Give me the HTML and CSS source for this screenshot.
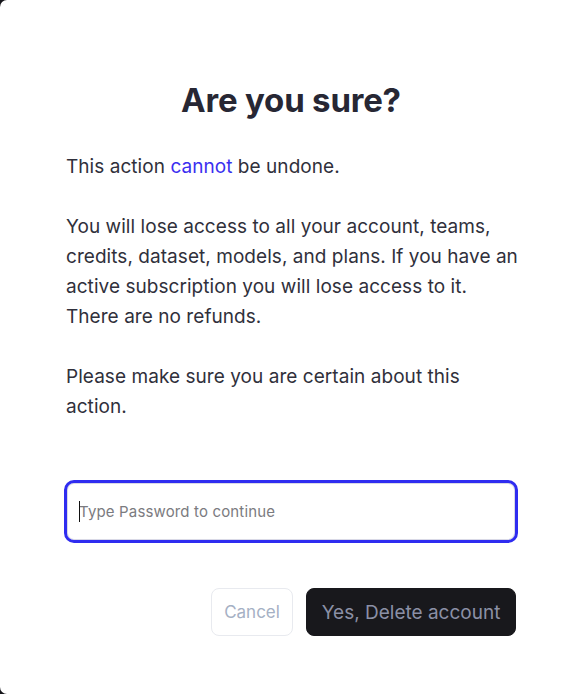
FILE: index.html
```html
<!DOCTYPE html>
<html lang="en">
<head>
<meta charset="utf-8">
<title>Are you sure?</title>
<link rel="stylesheet" href="styles.css">
</head>
<body>
<div class="dialog">
  <h1 class="title">Are you sure?</h1>
  <div class="body">
    <p>This action <span class="accent">cannot</span> be undone.</p>
    <p>You will lose access to all your account, teams, credits, dataset, models, and plans. If you have an active subscription you will lose access to it. There are no refunds.</p>
    <p>Please make sure you are certain about this action.</p>
  </div>
  <div class="field">
    <input class="input" type="password" placeholder="Type Password to continue">
    <span class="caret"></span>
  </div>
  <div class="actions">
    <button class="btn btn-cancel" type="button">Cancel</button>
    <button class="btn btn-danger" type="button">Yes, Delete account</button>
  </div>
</div>
</body>
</html>
```
FILE: styles.css
```css
html, body {
  margin: 0;
  padding: 0;
  height: 100%;
  overflow: hidden;
}
body {
  background: #15151a;
  font-family: Inter, "Noto Sans", sans-serif;
}
.dialog {
  box-sizing: border-box;
  width: 575px;
  height: 694px;
  background: #ffffff;
  border-radius: 7px 0 0 7px;
  padding: 80px 57px 0 64px;
  display: flex;
  flex-direction: column;
}
.title {
  margin: 0;
  font-size: 33px;
  line-height: 40px;
  font-weight: 700;
  color: #272734;
  text-align: center;
  letter-spacing: -0.2px;
}
.body {
  margin-top: 32px;
  padding-left: 2px;
  margin-right: -3px;
  display: flex;
  flex-direction: column;
  gap: 30px;
  font-size: 19px;
  line-height: 30px;
  color: #30303b;
  letter-spacing: 0.05px;
}
.body p {
  margin: 0;
}
.accent {
  color: #3a2ff0;
}
.field {
  position: relative;
  margin-top: 58px;
}
.input {
  box-sizing: border-box;
  width: 100%;
  height: 63px;
  border: 3px solid #2f2cf0;
  border-radius: 10px;
  padding: 0 12px;
  font-family: Inter, "Noto Sans", sans-serif;
  font-size: 15px;
  color: #333;
  outline: none;
  caret-color: transparent;
  box-shadow: inset 0 0 0 1px #d9d9e6;
  background: #fff;
}
.input::placeholder {
  color: #7b7b80;
  letter-spacing: 0.15px;
}
.caret {
  position: absolute;
  left: 15px;
  top: 21px;
  width: 1px;
  height: 21px;
  background: #111;
}
.actions {
  margin-top: 45px;
  display: flex;
  justify-content: flex-end;
  gap: 13px;
  padding-right: 2px;
}
.btn {
  box-sizing: border-box;
  height: 48px;
  border-radius: 8px;
  font-family: Inter, "Noto Sans", sans-serif;
  cursor: pointer;
}
.btn-cancel {
  width: 82px;
  background: #fff;
  border: 1px solid #e8eaef;
  color: #a5b0c4;
  font-size: 17px;
}
.btn-danger {
  width: 210px;
  background: #18181c;
  border: 1px solid #18181c;
  color: #8b90a6;
  font-size: 19px;
}
```
